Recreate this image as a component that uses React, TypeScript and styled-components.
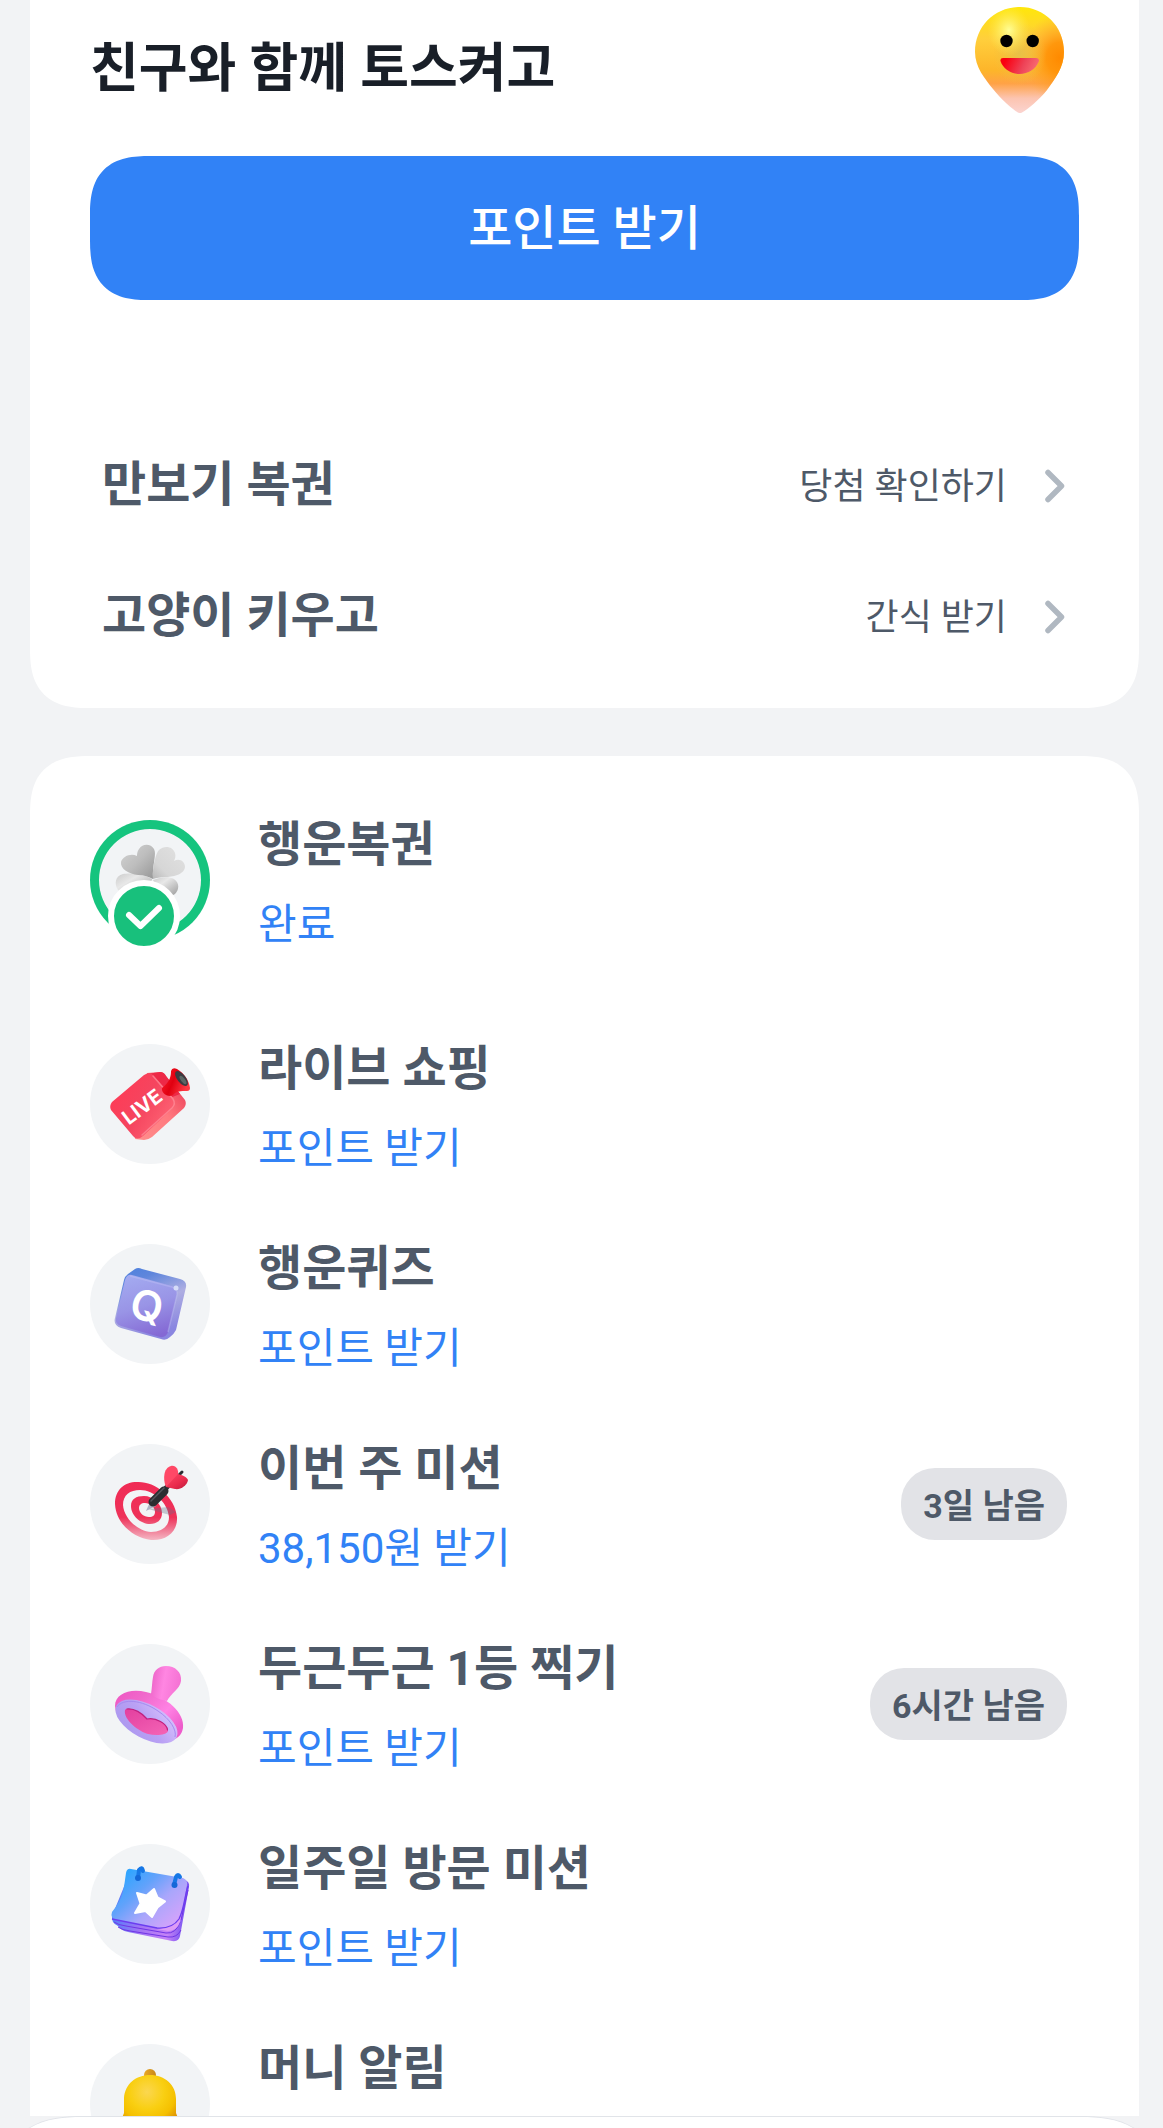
import React from "react";
import styled, { createGlobalStyle } from "styled-components";

const color = {
  page: "#f2f3f5",
  card: "#ffffff",
  strong: "#191f28",
  text: "#4e5968",
  blue: "#3182f6",
  circle: "#f2f4f6",
  badge: "#e2e3e7",
  line: "#e1e4e9",
  chevron: "#b0b8c1",
  green: "#15c47e",
};

const GlobalStyle = createGlobalStyle`
  *, *::before, *::after { box-sizing: border-box; }
  body {
    margin: 0;
    background: ${color.page};
    font-family: Roboto, "Noto Sans CJK KR", sans-serif;
    color: ${color.text};
  }
  h1, h2, p, ul { margin: 0; padding: 0; }
  a { color: inherit; text-decoration: none; }
`;

const Screen = styled.div`
  display: flex;
  flex-direction: column;
  height: 100vh;
  overflow: hidden;
`;

const Feed = styled.main`
  flex: 1;
  min-height: 0;
  overflow: hidden;
  display: flex;
  flex-direction: column;
  gap: 48px;
  padding: 0 24px 0 30px;
`;

const WalkCard = styled.section`
  flex: none;
  padding: 7px 60px 26px;
  background: ${color.card};
  border-radius: 0 0 50px 50px;

  @supports (corner-shape: superellipse(1.4)) {
    border-radius: 0 0 60px 60px;
    corner-shape: superellipse(1.4);
  }
`;

const MissionCard = styled.section`
  flex: none;
  padding: 24px 60px;
  background: ${color.card};
  border-radius: 50px 50px 0 0;

  @supports (corner-shape: superellipse(1.4)) {
    border-radius: 60px 60px 0 0;
    corner-shape: superellipse(1.4);
  }
`;

const Header = styled.header`
  display: flex;
  align-items: flex-end;
  justify-content: space-between;
  padding-right: 14px;
`;

const Heading = styled.h1`
  font-size: 53px;
  line-height: 88px;
  font-weight: 700;
  color: ${color.strong};
`;

const PrimaryButton = styled.button`
  display: block;
  width: 100%;
  height: 144px;
  margin: 43px 0 120px;
  padding: 0 0 8px;
  border: 0;
  border-radius: 50px;
  background: ${color.blue};
  color: #fff;
  font: inherit;
  font-size: 48px;
  font-weight: 500;
  cursor: pointer;

  @supports (corner-shape: superellipse(1.4)) {
    border-radius: 60px;
    corner-shape: superellipse(1.4);
  }
`;

const LinkRow = styled.a`
  display: flex;
  align-items: center;
  gap: 36px;
  height: 131px;
  padding: 0 12px;
`;

const RowTitle = styled.h2`
  flex: 1;
  padding-bottom: 2px;
  font-size: 48px;
  line-height: 72px;
  font-weight: 700;
`;

const RowAction = styled.span`
  padding-top: 2px;
  font-size: 36px;
  line-height: 54px;
`;

const Missions = styled.ul`
  list-style: none;
`;

const Mission = styled.li<{ $done?: boolean }>`
  padding-bottom: ${(p) => (p.$done ? 24 : 0)}px;
`;

const MissionLink = styled.a`
  display: flex;
  align-items: center;
  gap: 48px;
  height: 200px;
  padding-right: 12px;
`;

const IconCircle = styled.span<{ $done?: boolean }>`
  position: relative;
  flex: none;
  width: 120px;
  height: 120px;
  border-radius: 50%;
  background: ${color.circle};
  box-shadow: ${(p) => (p.$done ? `inset 0 0 0 9px ${color.green}` : "none")};

  > svg {
    display: block;
  }
`;

const DoneMark = styled.span`
  position: absolute;
  left: 18px;
  top: 60px;
  display: grid;
  place-items: center;
  width: 72px;
  height: 72px;
  border: 6px solid #fff;
  border-radius: 50%;
  background: #18c07c;
`;

const MissionText = styled.span`
  flex: 1;
  display: flex;
  flex-direction: column;
  gap: 12px;
  min-height: 154px;
  padding-top: 6px;
`;

const MissionTitle = styled.span`
  font-size: 48px;
  line-height: 72px;
  font-weight: 700;
`;

const MissionReward = styled.span`
  font-size: 42px;
  line-height: 64px;
  color: ${color.blue};
`;

const TimeBadge = styled.span`
  padding: 4px 22px 0;
  border-radius: 34px;
  background: ${color.badge};
  font-size: 34px;
  line-height: 68px;
  font-weight: 700;
`;

const BottomSheet = styled.footer`
  flex: none;
  height: 12px;
  overflow: hidden;

  &::before {
    content: "";
    display: block;
    height: 180px;
    border-top: 1px solid ${color.line};
    border-radius: 68px 68px 0 0;
    background: ${color.card};
  }

  @supports (corner-shape: superellipse(1.4)) {
    &::before {
      border-radius: 84px 84px 0 0;
      corner-shape: superellipse(1.4);
    }
  }
`;

function FaceIcon() {
  return (
    <svg width="90" height="106" viewBox="0 0 90 106" aria-hidden="true">
      <defs>
        <linearGradient id="pinBase" x1="0" y1="0" x2="0" y2="1">
          <stop offset="0" stopColor="#ffe70a" />
          <stop offset="0.3" stopColor="#ffcf3c" />
          <stop offset="0.6" stopColor="#fdb52a" />
          <stop offset="0.72" stopColor="#ffa245" />
          <stop offset="0.86" stopColor="#fcc4b0" />
          <stop offset="1" stopColor="#fbd4d0" />
        </linearGradient>
        <radialGradient id="pinSide" cx="0.95" cy="0.48" r="0.42">
          <stop offset="0" stopColor="#ff8a00" />
          <stop offset="0.35" stopColor="#ff9208" stopOpacity="0.9" />
          <stop offset="1" stopColor="#ffa63a" stopOpacity="0" />
        </radialGradient>
        <radialGradient id="pinCenter" cx="0.5" cy="0.44" r="0.3">
          <stop offset="0" stopColor="#e8c048" />
          <stop offset="1" stopColor="#f0c040" stopOpacity="0" />
        </radialGradient>
        <radialGradient id="pinLight" cx="0.38" cy="0.22" r="0.24">
          <stop offset="0" stopColor="#ffff96" />
          <stop offset="1" stopColor="#ffee50" stopOpacity="0" />
        </radialGradient>
        <linearGradient id="mouth" x1="0" y1="0.3" x2="1" y2="0.5">
          <stop offset="0.1" stopColor="#fa0010" />
          <stop offset="0.6" stopColor="#ee4358" />
          <stop offset="1" stopColor="#f96f74" />
        </linearGradient>
      </defs>
      {["pinBase", "pinSide", "pinCenter", "pinLight"].map((id) => (
        <path
          key={id}
          fill={`url(#${id})`}
          d="M45 0C69 0 89 19 89 45C89 60 80 72 72 83C64 93 53 102 47 105.500Q45 106.500 43 105.500C37 102 26 92 18 82C10 72 0 60 0 45C0 19 20 0 45 0Z"
        />
      ))}
      <circle cx="31.500" cy="34" r="6.200" />
      <circle cx="57.700" cy="34" r="6.200" />
      <path fill="url(#mouth)" d="M28 51H61Q64 51 64 54C61 62 53 67 44.500 67C36 67 28 62 25.500 54Q25 51 28 51Z" />
    </svg>
  );
}

function Chevron() {
  return (
    <svg width="24" height="36" viewBox="0 0 24 36" fill="none" aria-hidden="true">
      <path d="M5 4.500L18.500 18L5 31.500" stroke={color.chevron} strokeWidth="5.500" strokeLinecap="round" strokeLinejoin="round" />
    </svg>
  );
}

function Art({ children }: { children: React.ReactNode }) {
  return (
    <svg width="120" height="120" viewBox="0 0 120 120" aria-hidden="true">
      {children}
    </svg>
  );
}

function CloverArt() {
  return (
    <Art>
      <defs>
        <linearGradient id="leafA" x1="0" y1="0" x2="1" y2="1">
          <stop offset="0" stopColor="#d4d4d4" />
          <stop offset="0.5" stopColor="#bdbdbd" />
          <stop offset="1" stopColor="#959595" />
        </linearGradient>
        <linearGradient id="leafB" x1="1" y1="0" x2="0" y2="1">
          <stop offset="0" stopColor="#e2e2e2" />
          <stop offset="0.7" stopColor="#d6d6d6" />
          <stop offset="1" stopColor="#b8b8b8" />
        </linearGradient>
        <linearGradient id="leafC" x1="0" y1="0" x2="1" y2="1">
          <stop offset="0" stopColor="#cbcbcb" />
          <stop offset="0.35" stopColor="#e8e8e8" />
          <stop offset="1" stopColor="#9c9c9c" />
        </linearGradient>
      </defs>
      <path fill="url(#leafC)" d="M62 59C51 53 39 53 33 54C25 56 24 64 28 70C32 76 42 76 50 76L62 60Z" />
      <path fill="url(#leafC)" d="M63 60C70 57 79 56 84 59C90 63 89 70 85 74C82 76 76 76 70 74Z" />
      <path fill="url(#leafA)" d="M63 59C62 45 67 34 64 29C61 24 53 23 49 29C47 32 47 34 47 36C41 33 33 36 31 42C30 49 39 54 48 55C54 55 59 57 63 59Z" />
      <path fill="url(#leafB)" d="M63 59C62 47 66 33 69 30C74 25 83 26 85 33C86 36 85 39 84 41C89 38 95 41 95 47C94 55 82 57 75 57C70 57 66 58 63 59Z" />
    </Art>
  );
}

function LiveArt() {
  return (
    <Art>
      <defs>
        <linearGradient id="liveFront" x1="0" y1="0.2" x2="1" y2="0.8">
          <stop offset="0" stopColor="#ff3a55" />
          <stop offset="0.5" stopColor="#f5455f" />
          <stop offset="1" stopColor="#ff6a78" />
        </linearGradient>
        <linearGradient id="liveSide" x1="1" y1="0" x2="0" y2="1">
          <stop offset="0" stopColor="#e8304e" />
          <stop offset="0.5" stopColor="#ff7a80" />
          <stop offset="1" stopColor="#ff8f8c" />
        </linearGradient>
        <linearGradient id="liveLens" x1="0" y1="0" x2="1" y2="0.4">
          <stop offset="0" stopColor="#ff2030" />
          <stop offset="0.5" stopColor="#e00010" />
          <stop offset="1" stopColor="#ff3a44" />
        </linearGradient>
      </defs>
      <path fill="url(#liveSide)" d="M57 29L70 28Q74 28 76 32L95 56Q97 60 94 64L62 93Q58 96 54 96L45 95Z" />
      <path fill="#ed2947" d="M57 30L70 28Q74 28 76 32L90 50L80 54L62 31Z" />
      <path fill="url(#liveFront)" d="M54 31Q60 27 64 32L84 55Q87 60 83 64L53 92Q47 97 43 92L21 66Q19 62 22 58Z" />
      <path fill="none" stroke="#ff9aa4" strokeWidth="1.500" strokeLinecap="round" d="M63 32L83 55Q86 60 82 64L52 91" opacity="0.6" />
      <path fill="url(#liveLens)" d="M72 44C80 38 81 32 81 27Q82 23 87 25C94 29 99 36 100 44Q100 47 97 47C91 47 86 47 83 51C78 54 71 49 72 44Z" />
      <ellipse cx="91.500" cy="34.500" rx="4.200" ry="9" transform="rotate(-38 91.500 34.500)" fill="#3b3a40" />
      <ellipse cx="93" cy="36" rx="2" ry="5" transform="rotate(-38 93 36)" fill="#5c6664" />
      <text x="53" y="64" transform="rotate(-37 53 64)" textAnchor="middle" dominantBaseline="middle" fontFamily="Inter, sans-serif" fontWeight="700" fontSize="20" fill="#fff">
        LIVE
      </text>
    </Art>
  );
}

function QuizArt() {
  return (
    <Art>
      <defs>
        <linearGradient id="quizFace" x1="0.3" y1="0" x2="0.6" y2="1">
          <stop offset="0" stopColor="#a3aaf0" />
          <stop offset="0.5" stopColor="#9994e6" />
          <stop offset="1" stopColor="#8468d4" />
        </linearGradient>
        <linearGradient id="quizEdge" x1="0" y1="0" x2="0.4" y2="1">
          <stop offset="0" stopColor="#4a80de" />
          <stop offset="0.25" stopColor="#5f86dc" />
          <stop offset="0.6" stopColor="#aeaee2" />
          <stop offset="1" stopColor="#8a86e0" />
        </linearGradient>
      </defs>
      <path fill="url(#quizEdge)" d="M45 25Q48 23 52 25L90 35Q97 37 96 43L86 86Q84 90 80 93Q76 97 71 95L31 84Q23 81 25 74L34 36Q35 32 38 30Z" />
      <path fill="url(#quizFace)" d="M42 31L82 42Q88 44 87 50L78 88Q76 94 70 93L31 82Q25 80 26 74L35 36Q37 30 42 31Z" />
      <path fill="none" stroke="#c5c8f6" strokeWidth="1.500" d="M40 32L82 43Q88 45 87 51L78 88" opacity="0.35" />
      <circle cx="86" cy="44" r="2.500" fill="#d5dcf8" />
      <text x="57" y="77" transform="rotate(13 57 62)" textAnchor="middle" fontFamily="Inter, sans-serif" fontWeight="600" fontSize="42" fill="#fff">
        Q
      </text>
    </Art>
  );
}

function TargetArt() {
  return (
    <Art>
      <defs>
        <linearGradient id="ring" gradientUnits="userSpaceOnUse" x1="56" y1="38" x2="56" y2="97">
          <stop offset="0" stopColor="#f02b55" />
          <stop offset="0.6" stopColor="#ee3259" />
          <stop offset="0.78" stopColor="#f0708c" />
          <stop offset="1" stopColor="#f5bcc8" />
        </linearGradient>
        <linearGradient id="fin" x1="0" y1="0" x2="1" y2="1">
          <stop offset="0" stopColor="#ff4a66" />
          <stop offset="0.6" stopColor="#e92a4c" />
          <stop offset="1" stopColor="#b81c3c" />
        </linearGradient>
      </defs>
      <path
        fill="url(#ring)"
        fillRule="evenodd"
        d="M47 38C64 37 85 52 87 73C88 88 76 97 61 96C44 94 26 80 25 60C25 46 34 38 47 38ZM50 46C40 46 33 51 33 61C34 74 47 87 61 88C71 88 79 83 79 73C78 59 64 46 50 46Z"
      />
      <path
        fill="url(#ring)"
        fillRule="evenodd"
        d="M54 52C63 52 72 60 72 69C72 76 67 80 60 80C51 80 41 72 41 62C41 55 46 52 54 52ZM55 59C51 59 49 61 49 64C49 69 54 73 59 73C63 73 65 71 65 68C65 63 60 59 55 59Z"
      />
      <path fill="#6a6f88" opacity="0.35" d="M58 65L78 63L86 68L80 71Z" />
      <path fill="#aeb4c4" d="M56 67L60 58L66 62Z" />
      <path stroke="#2b2d31" strokeWidth="9" strokeLinecap="round" d="M63 58L74 47" />
      <path stroke="#2b2d31" strokeWidth="5" strokeLinecap="round" d="M72 48L82 38" />
      <path stroke="#2b2d31" strokeWidth="3" strokeLinecap="round" d="M82 38L92 28" />
      <path stroke="#53565c" strokeWidth="1.500" strokeLinecap="round" d="M61 57L74 44" />
      <path fill="#ff4866" d="M76 43C73 36 73 24 81 22C86 21 89 26 88 31L82 41Z" />
      <path fill="url(#fin)" d="M76 43L88 30C92 31 97 33 98 36C97 42 90 46 85 45Z" />
    </Art>
  );
}

function StampArt() {
  return (
    <Art>
      <defs>
        <linearGradient id="handle" x1="0" y1="0" x2="1" y2="0.2">
          <stop offset="0" stopColor="#e95fc4" />
          <stop offset="0.5" stopColor="#ff86e2" />
          <stop offset="1" stopColor="#f573d4" />
        </linearGradient>
        <linearGradient id="stampTop" x1="0" y1="0" x2="1" y2="0.7">
          <stop offset="0" stopColor="#ee55c2" />
          <stop offset="0.35" stopColor="#f06acc" />
          <stop offset="0.7" stopColor="#ff82e4" />
          <stop offset="1" stopColor="#ee5ccb" />
        </linearGradient>
        <linearGradient id="stampPlate" x1="1" y1="0" x2="0" y2="1">
          <stop offset="0" stopColor="#dcc8ff" />
          <stop offset="0.5" stopColor="#b9a0f4" />
          <stop offset="1" stopColor="#a896ee" />
        </linearGradient>
        <linearGradient id="stampHeart" x1="0" y1="0" x2="0.8" y2="1">
          <stop offset="0" stopColor="#e23f9f" />
          <stop offset="1" stopColor="#f361b4" />
        </linearGradient>
      </defs>
      <path fill="url(#stampTop)" d="M25 62C25 49 41 44 56 48C77 53 95 69 93 84C92 90 89 93 85 95L26 68Z" />
      <path fill="url(#handle)" d="M63 33C64 26 69 22 76 22C85 22 92 28 91 37C90 45 81 49 77 57C72 56 65 54 61 50C62 44 62 38 63 33Z" />
      <ellipse cx="56.500" cy="77.500" rx="34" ry="17" transform="rotate(28 56.500 77.500)" fill="url(#stampPlate)" />
      <path fill="none" stroke="#a48af0" strokeWidth="1" d="M27 63C33 54 52 56 68 67C80 75 87 86 85 93" />
      <path fill="url(#stampHeart)" d="M36 65C43 64 52 69 57 75C66 73 79 80 78 87C77 91 66 92 58 90C50 88 33 76 35 66Z" />
      <path fill="none" stroke="#c0207f" strokeWidth="1.200" strokeLinecap="round" d="M37 65C44 64 52 69 57 75C66 73 77 80 77.500 86" />
    </Art>
  );
}

function CalendarArt() {
  return (
    <Art>
      <defs>
        <linearGradient id="sheet" x1="0.1" y1="0.2" x2="0.9" y2="0.9">
          <stop offset="0" stopColor="#31a5ff" />
          <stop offset="0.3" stopColor="#62a2fb" />
          <stop offset="0.6" stopColor="#a9a6fb" />
          <stop offset="1" stopColor="#d7a3fb" />
        </linearGradient>
        <linearGradient id="pages" x1="0" y1="0.5" x2="1" y2="0.6">
          <stop offset="0" stopColor="#4f80f8" />
          <stop offset="0.4" stopColor="#a374f4" />
          <stop offset="0.75" stopColor="#c583f6" />
          <stop offset="1" stopColor="#6a4cf0" />
        </linearGradient>
      </defs>
      <path fill="url(#pages)" d="M40 28L95 36Q100 38 99 43L90 92Q89 98 82 97L38 88Q30 86 28 82Q21 79 22 72Z" />
      <path fill="none" stroke="#7135e6" strokeWidth="1" d="M24 78Q28 81 36 82L76 89Q86 90 90 78M28 83Q32 86 40 87L78 93Q87 94 91 86M98 46L91 76" />
      <path fill="#dd9cf6" d="M67 85Q84 84 92 68L90 78Q87 87 78 87Z" />
      <path fill="url(#sheet)" d="M41 25L93 34Q98 36 97 41C94 56 94 66 88 75C84 82 77 84 68 84L26 76Q20 74 22 68C34 54 34 42 36 29Q37 24 41 25Z" />
      <path fill="none" stroke="#6b3df0" strokeWidth="1.300" d="M22 75L67 84Q82 85 89 75C94 66 95 50 98 42" />
      <path
        fill="#fff"
        stroke="#fff"
        strokeWidth="2"
        strokeLinejoin="round"
        d="M64 45L67.500 53.500L75 57.500L67.500 63.500L62 73L55.500 67L45 69L50.500 59.500L47 49L56.500 51.500Z"
      />
      <path fill="none" stroke="#1677e6" strokeWidth="4" strokeLinecap="round" d="M53 27Q52 22 49 26L48 34M90 33Q88 29 86 33L84 41" />
      <circle cx="48" cy="34" r="3" fill="#1468d8" />
      <circle cx="84.500" cy="41" r="3" fill="#1468d8" />
    </Art>
  );
}

function BellArt() {
  return (
    <Art>
      <defs>
        <radialGradient id="bell" gradientUnits="userSpaceOnUse" cx="57" cy="48" r="38">
          <stop offset="0" stopColor="#fbd750" />
          <stop offset="0.45" stopColor="#f9cf12" />
          <stop offset="0.75" stopColor="#f5c000" />
          <stop offset="1" stopColor="#dd9206" />
        </radialGradient>
        <linearGradient id="bellKnob" x1="0" y1="0" x2="1" y2="0">
          <stop offset="0" stopColor="#e9a823" />
          <stop offset="1" stopColor="#c8881a" />
        </linearGradient>
      </defs>
      <circle cx="60" cy="31" r="6" fill="url(#bellKnob)" />
      <path fill="url(#bell)" d="M34 69V54C35 40 46 31 60 31C75 31 86 41 86 55V69L92 84Q93 90 86 90H34Q27 90 28 84Z" />
      <circle cx="60" cy="92" r="9" fill="#c8881a" />
    </Art>
  );
}

type MissionItem = {
  title: string;
  Icon: () => React.JSX.Element;
  reward?: string;
  left?: string;
  done?: boolean;
};

const links = [
  { title: "만보기 복권", action: "당첨 확인하기" },
  { title: "고양이 키우고", action: "간식 받기" },
];

const missions: MissionItem[] = [
  { title: "행운복권", reward: "완료", Icon: CloverArt, done: true },
  { title: "라이브 쇼핑", reward: "포인트 받기", Icon: LiveArt },
  { title: "행운퀴즈", reward: "포인트 받기", Icon: QuizArt },
  { title: "이번 주 미션", reward: "38,150원 받기", Icon: TargetArt, left: "3일 남음" },
  { title: "두근두근 1등 찍기", reward: "포인트 받기", Icon: StampArt, left: "6시간 남음" },
  { title: "일주일 방문 미션", reward: "포인트 받기", Icon: CalendarArt },
  { title: "머니 알림", Icon: BellArt },
];

export default function App() {
  return (
    <Screen>
      <GlobalStyle />
      <Feed>
        <WalkCard>
          <Header>
            <Heading>친구와 함께 토스켜고</Heading>
            <FaceIcon />
          </Header>
          <PrimaryButton type="button">포인트 받기</PrimaryButton>
          {links.map((link) => (
            <LinkRow href="#" key={link.title}>
              <RowTitle>{link.title}</RowTitle>
              <RowAction>{link.action}</RowAction>
              <Chevron />
            </LinkRow>
          ))}
        </WalkCard>
        <MissionCard>
          <Missions>
            {missions.map(({ title, reward, Icon, done, left }) => (
              <Mission key={title} $done={done}>
                <MissionLink href="#">
                  <IconCircle $done={done}>
                    <Icon />
                    {done && (
                      <DoneMark>
                        <svg width="60" height="60" viewBox="0 0 60 60" fill="none" aria-hidden="true">
                          <path d="M15 29L26.500 40L45 22" stroke="#fff" strokeWidth="6" strokeLinecap="round" strokeLinejoin="round" />
                        </svg>
                      </DoneMark>
                    )}
                  </IconCircle>
                  <MissionText>
                    <MissionTitle>{title}</MissionTitle>
                    {reward && <MissionReward>{reward}</MissionReward>}
                  </MissionText>
                  {left && <TimeBadge>{left}</TimeBadge>}
                </MissionLink>
              </Mission>
            ))}
          </Missions>
        </MissionCard>
      </Feed>
      <BottomSheet />
    </Screen>
  );
}
